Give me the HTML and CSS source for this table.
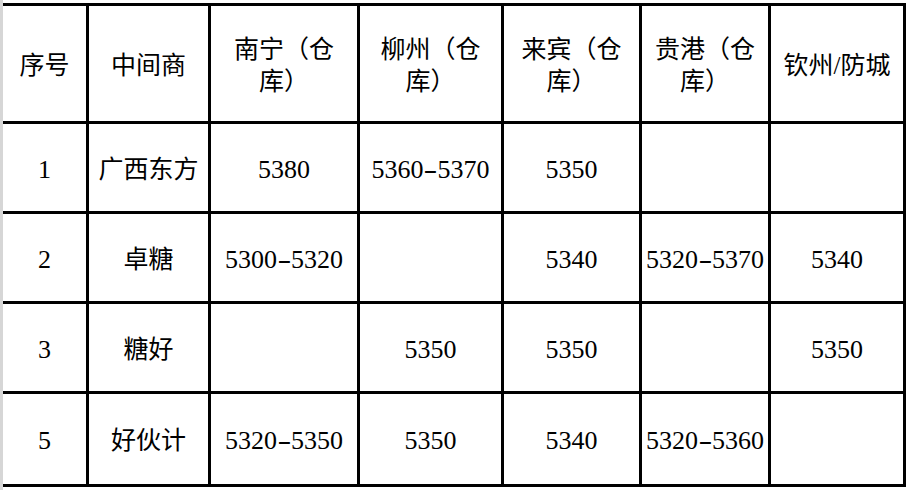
FILE: index.html
```html
<!DOCTYPE html>
<html lang="zh-CN">
<head>
<meta charset="utf-8">
<title>价格表</title>
<link rel="stylesheet" href="styles.css">
</head>
<body>
<div class="sheet">
  <div class="grid">
    <div class="cell head">序号</div>
    <div class="cell head">中间商</div>
    <div class="cell head">南宁（仓库）</div>
    <div class="cell head">柳州（仓库）</div>
    <div class="cell head">来宾（仓库）</div>
    <div class="cell head">贵港（仓库）</div>
    <div class="cell head">钦州/防城</div>

    <div class="cell num">1</div>
    <div class="cell">广西东方</div>
    <div class="cell num">5380</div>
    <div class="cell num">5360<span class="dash">-</span>5370</div>
    <div class="cell num">5350</div>
    <div class="cell"></div>
    <div class="cell"></div>

    <div class="cell num">2</div>
    <div class="cell">卓糖</div>
    <div class="cell num">5300<span class="dash">-</span>5320</div>
    <div class="cell"></div>
    <div class="cell num">5340</div>
    <div class="cell num">5320<span class="dash">-</span>5370</div>
    <div class="cell num">5340</div>

    <div class="cell num">3</div>
    <div class="cell">糖好</div>
    <div class="cell"></div>
    <div class="cell num">5350</div>
    <div class="cell num">5350</div>
    <div class="cell"></div>
    <div class="cell num">5350</div>

    <div class="cell num">5</div>
    <div class="cell">好伙计</div>
    <div class="cell num">5320<span class="dash">-</span>5350</div>
    <div class="cell num">5350</div>
    <div class="cell num">5340</div>
    <div class="cell num">5320<span class="dash">-</span>5360</div>
    <div class="cell"></div>
  </div>
</div>
</body>
</html>
```
FILE: styles.css
```css
html, body {
  margin: 0;
  padding: 0;
  background: #ffffff;
}

body {
  font-family: "Liberation Serif", "Noto Sans CJK SC", serif;
  font-size: 25px;
  color: #000000;
}

.sheet {
  height: 487px;
  padding-top: 3px;
  border-left: 3px solid #d6d6d6;
}

.grid {
  display: inline-grid;
  grid-template-columns: 83px 119px 146px 141px 135px 126px 132px;
  grid-template-rows: 115px 87px 87px 87px 90px;
  gap: 3px;
  padding: 3px 3px 3px 0;
  background: #000000;
}

.cell {
  background: #ffffff;
  display: flex;
  align-items: center;
  justify-content: center;
  text-align: center;
  line-height: 32px;
  padding-top: 4px;
  box-sizing: border-box;
  text-spacing-trim: space-all;
}

.head {
  padding-left: 2px;
  padding-right: 2px;
}

.num {
  font-family: "Liberation Serif", serif;
  font-size: 26px;
}

.dash {
  display: inline-block;
  width: 0.333em;
  margin: 0 2.7px;
  text-align: center;
  transform: scaleX(1.6);
}
```
